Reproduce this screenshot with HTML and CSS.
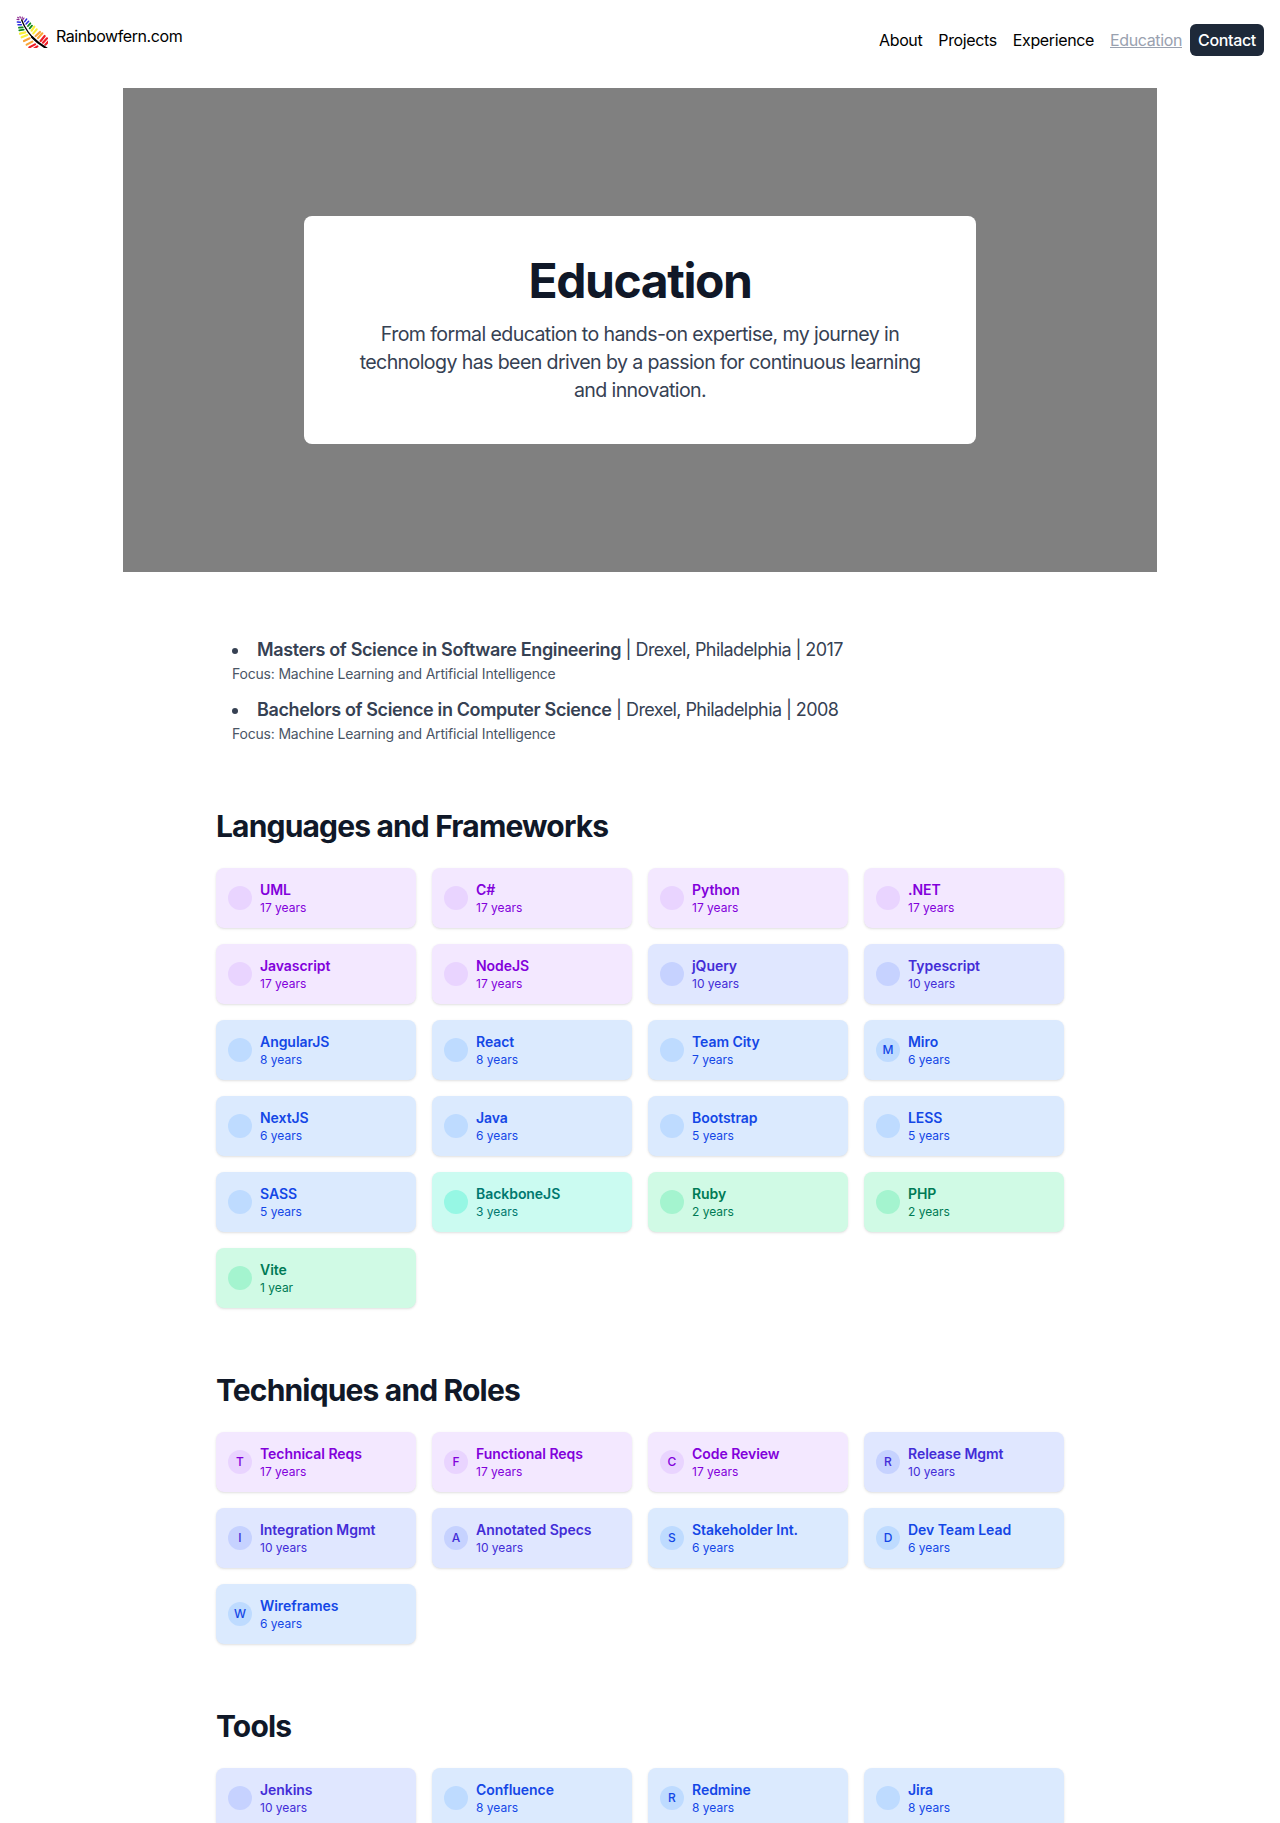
FILE: index.html
```html
<!DOCTYPE html>
<html lang="en">
<head>
<meta charset="utf-8">
<title>Education | Rainbowfern.com</title>
<link rel="stylesheet" href="styles.css">
</head>
<body>
<header class="site-header">
  <a class="brand">
    <svg class="brand-logo" viewBox="48 48 96 96" fill="none" stroke-linecap="round" stroke-width="6.5">
      <g stroke="#8b2a8f" stroke-width="3.5"><path d="M53 52l3 2M51 58l6 1M60 50l1 4M67 51l-1 5M72 54l-4 6"/></g>
      <g stroke="#2a2ae0" stroke-width="4.5"><path d="M52 66l9 1M54 74l10 0M80 57l-6 8M86 64l-8 8"/></g>
      <g stroke="#128a1e" stroke-width="5.5"><path d="M57 83l11-1M58 91l13-2M91 70l-7 8M96 77l-7 8"/></g>
      <g stroke="#fbf03a"><path d="M60 101l16-4M65 112l17-7M103 80l-8 12M110 88l-10 12"/></g>
      <g stroke="#f9a63a"><path d="M72 123l17-8M80 134l17-9M120 96l-13 12M127 100l-13 14"/></g>
      <g stroke="#ee1c25"><path d="M88 142l17-9M103 145l9-6M134 108l-12 15M141 115l-12 13M146 124l-10 10"/></g>
      <path d="M65 60C73 82 92 112 116 129" stroke="#000" stroke-width="4"/>
      <path d="M96 111C110 126 124 136 140 145" stroke="#000" stroke-width="6"/>
    </svg>
    <span>Rainbowfern.com</span>
  </a>
  <nav class="site-nav">
    <a class="nav-link">About</a>
    <a class="nav-link">Projects</a>
    <a class="nav-link">Experience</a>
    <a class="nav-link nav-link-current">Education</a>
    <a class="nav-link nav-link-button">Contact</a>
  </nav>
</header>
<main>
  <section class="hero">
    <div class="hero-card">
      <h1>Education</h1>
      <p>From formal education to hands-on expertise, my journey in<br>technology has been driven by a passion for continuous learning<br>and innovation.</p>
    </div>
  </section>
  <div class="content">
    <ul class="degrees">
      <li><strong>Masters of Science in Software Engineering</strong> | Drexel, Philadelphia | 2017<p>Focus: Machine Learning and Artificial Intelligence</p></li>
      <li><strong>Bachelors of Science in Computer Science</strong> | Drexel, Philadelphia | 2008<p>Focus: Machine Learning and Artificial Intelligence</p></li>
    </ul>
    <section class="skills">
      <h2>Languages and Frameworks</h2>
      <div class="skill-grid">
        <div class="skill purple"><span class="dot"></span><div><h3>UML</h3><p>17 years</p></div></div>
        <div class="skill purple"><span class="dot"></span><div><h3>C#</h3><p>17 years</p></div></div>
        <div class="skill purple"><span class="dot"></span><div><h3>Python</h3><p>17 years</p></div></div>
        <div class="skill purple"><span class="dot"></span><div><h3>.NET</h3><p>17 years</p></div></div>
        <div class="skill purple"><span class="dot"></span><div><h3>Javascript</h3><p>17 years</p></div></div>
        <div class="skill purple"><span class="dot"></span><div><h3>NodeJS</h3><p>17 years</p></div></div>
        <div class="skill indigo"><span class="dot"></span><div><h3>jQuery</h3><p>10 years</p></div></div>
        <div class="skill indigo"><span class="dot"></span><div><h3>Typescript</h3><p>10 years</p></div></div>
        <div class="skill blue"><span class="dot"></span><div><h3>AngularJS</h3><p>8 years</p></div></div>
        <div class="skill blue"><span class="dot"></span><div><h3>React</h3><p>8 years</p></div></div>
        <div class="skill blue"><span class="dot"></span><div><h3>Team City</h3><p>7 years</p></div></div>
        <div class="skill blue"><span class="dot">M</span><div><h3>Miro</h3><p>6 years</p></div></div>
        <div class="skill blue"><span class="dot"></span><div><h3>NextJS</h3><p>6 years</p></div></div>
        <div class="skill blue"><span class="dot"></span><div><h3>Java</h3><p>6 years</p></div></div>
        <div class="skill blue"><span class="dot"></span><div><h3>Bootstrap</h3><p>5 years</p></div></div>
        <div class="skill blue"><span class="dot"></span><div><h3>LESS</h3><p>5 years</p></div></div>
        <div class="skill blue"><span class="dot"></span><div><h3>SASS</h3><p>5 years</p></div></div>
        <div class="skill teal"><span class="dot"></span><div><h3>BackboneJS</h3><p>3 years</p></div></div>
        <div class="skill green"><span class="dot"></span><div><h3>Ruby</h3><p>2 years</p></div></div>
        <div class="skill green"><span class="dot"></span><div><h3>PHP</h3><p>2 years</p></div></div>
        <div class="skill green"><span class="dot"></span><div><h3>Vite</h3><p>1 year</p></div></div>
      </div>
    </section>
    <section class="skills">
      <h2>Techniques and Roles</h2>
      <div class="skill-grid">
        <div class="skill purple"><span class="dot">T</span><div><h3>Technical Reqs</h3><p>17 years</p></div></div>
        <div class="skill purple"><span class="dot">F</span><div><h3>Functional Reqs</h3><p>17 years</p></div></div>
        <div class="skill purple"><span class="dot">C</span><div><h3>Code Review</h3><p>17 years</p></div></div>
        <div class="skill indigo"><span class="dot">R</span><div><h3>Release Mgmt</h3><p>10 years</p></div></div>
        <div class="skill indigo"><span class="dot">I</span><div><h3>Integration Mgmt</h3><p>10 years</p></div></div>
        <div class="skill indigo"><span class="dot">A</span><div><h3>Annotated Specs</h3><p>10 years</p></div></div>
        <div class="skill blue"><span class="dot">S</span><div><h3>Stakeholder Int.</h3><p>6 years</p></div></div>
        <div class="skill blue"><span class="dot">D</span><div><h3>Dev Team Lead</h3><p>6 years</p></div></div>
        <div class="skill blue"><span class="dot">W</span><div><h3>Wireframes</h3><p>6 years</p></div></div>
      </div>
    </section>
    <section class="skills">
      <h2>Tools</h2>
      <div class="skill-grid">
        <div class="skill indigo"><span class="dot"></span><div><h3>Jenkins</h3><p>10 years</p></div></div>
        <div class="skill blue"><span class="dot"></span><div><h3>Confluence</h3><p>8 years</p></div></div>
        <div class="skill blue"><span class="dot">R</span><div><h3>Redmine</h3><p>8 years</p></div></div>
        <div class="skill blue"><span class="dot"></span><div><h3>Jira</h3><p>8 years</p></div></div>
      </div>
    </section>
  </div>
</main>
</body>
</html>
```
FILE: styles.css
```css
* { box-sizing: border-box; margin: 0; padding: 0; }

html { height: 1823px; overflow: hidden; }

body {
  height: 1823px;
  overflow: hidden;
  background: #fff;
  color: #000;
  font-family: Inter, "Liberation Sans", sans-serif;
  font-size: 16px;
  line-height: 24px;
}

.site-header {
  display: flex;
  justify-content: space-between;
  align-items: flex-start;
  height: 88px;
  padding: 16px 16px 0;
}

.brand { display: flex; gap: 8px; letter-spacing: -0.42px; }
.brand span { padding-top: 8px; }
.brand-logo { width: 32px; height: 32px; }

.site-nav { display: flex; padding-top: 8px; letter-spacing: -0.37px; }
.nav-link { padding: 4px 8px; }
.nav-link-current { color: #99a1af; text-decoration: underline; }
.nav-link-button {
  border-radius: 6px;
  background: #1e2939;
  color: #fff;
  font-weight: 500;
  letter-spacing: -0.33px;
}

.hero {
  display: flex;
  align-items: center;
  justify-content: center;
  width: 1034px;
  height: 484px;
  margin: 0 auto;
  background: #808080;
}

.hero-card {
  width: 672px;
  padding: 41px 0 40px;
  border-radius: 8px;
  background: #fff;
  text-align: center;
}

.hero-card h1 {
  margin-bottom: 15px;
  color: #101828;
  font-size: 48px;
  line-height: 48px;
  letter-spacing: -1.44px;
}

.hero-card p {
  color: #364153;
  font-size: 19.6px;
  line-height: 28px;
  letter-spacing: -0.61px;
}

.content { width: 848px; margin: 64px auto 0; }

.degrees {
  display: grid;
  gap: 12px;
  padding-left: 16px;
  list-style: disc inside;
  color: #364153;
  font-size: 18px;
  line-height: 28px;
  letter-spacing: -0.58px;
}
.degrees strong { font-weight: 600; letter-spacing: -0.37px; }
.degrees p {
  color: #4a5565;
  font-size: 14px;
  line-height: 20px;
  letter-spacing: -0.19px;
}

.skills { margin-top: 64px; }
.skills h2 {
  margin-bottom: 24px;
  color: #101828;
  font-size: 30px;
  line-height: 36px;
  letter-spacing: -0.84px;
}

.skill-grid {
  display: grid;
  grid-template-columns: repeat(4, 1fr);
  gap: 16px;
}

.skill {
  display: flex;
  align-items: center;
  gap: 8px;
  height: 60px;
  padding: 12px;
  border-radius: 8px;
  box-shadow: 0 1px 3px rgba(0, 0, 0, .1), 0 1px 2px -1px rgba(0, 0, 0, .1);
}
.skill h3 { font-size: 14px; font-weight: 600; line-height: 20px; letter-spacing: -0.05px; }
.skill p { font-size: 12px; line-height: 16px; }

.dot {
  display: flex;
  align-items: center;
  justify-content: center;
  width: 24px;
  height: 24px;
  border-radius: 50%;
  font-size: 12px;
  font-weight: 500;
  line-height: 16px;
}

.purple { background: #f3e8ff; color: #8200db; }
.purple .dot { background: #e9d4ff; }
.indigo { background: #e0e7ff; color: #432dd7; }
.indigo .dot { background: #c6d2ff; }
.blue { background: #dbeafe; color: #1447e6; }
.blue .dot { background: #bedbff; }
.teal { background: #cbfbf1; color: #00786f; }
.teal .dot { background: #96f7e4; }
.green { background: #d0fae5; color: #007a55; }
.green .dot { background: #a4f4cf; }
```
